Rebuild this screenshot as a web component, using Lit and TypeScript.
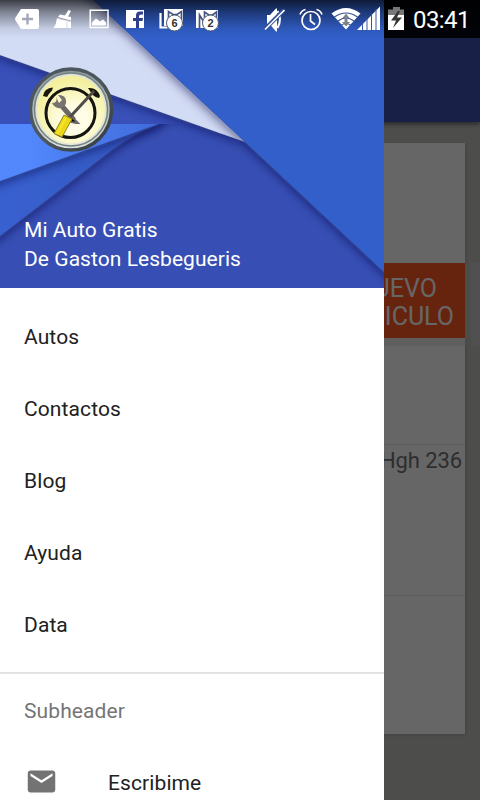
import { LitElement, css, html, svg } from "lit";
import { customElement, property } from "lit/decorators.js";

/**
 * @tag status-bar
 * @summary Translucent system bar with notification and device icons
 */
@customElement("status-bar")
export class StatusBar extends LitElement {
  @property()
  time = "";

  static styles = css`
    :host {
      display: flex;
      height: 38px;
      align-items: center;
      padding-left: 9px;
      box-sizing: border-box;
      color: #fff;
      background: linear-gradient(rgba(0, 0, 0, 0.72), rgba(0, 0, 0, 0.4) 32%, rgba(0, 0, 0, 0.08) 75%, transparent);
    }

    svg {
      display: block;
      flex: none;
      fill: #fff;
    }

    .device {
      display: flex;
      align-items: center;
      margin-left: 32px;
    }

    .time {
      padding: 2px 0 0 5px;
      font-size: 24px;
      letter-spacing: -0.6px;
      line-height: 36px;
      white-space: nowrap;
    }

    .count {
      font: bold 11px "Liberation Sans", sans-serif;
      fill: #333;
      text-anchor: middle;
    }
  `;

  renderCat(count: string, doubled: boolean) {
    return html`<svg width="36" height="38" viewBox="0 0 36 38">
      ${doubled
        ? svg`<path d="M7.500 13v14.500h7" fill="none" stroke="#fff" stroke-width="2.200" />
          <path d="M11 9h19v17H11z" />
          <path d="M15.500 20v-8.500l4.500 3h4l4.500-3V20" fill="none" stroke="#46557f" stroke-width="1.700" />`
        : svg`<path d="M7 10h22v18H7z" />
          <path d="M10.500 28V15l5 8M15.500 18v-6l4.500 3h3.500l4-3V18" fill="none" stroke="#46557f" stroke-width="1.700" />`}
      <circle cx="21.500" cy="23" r="8" stroke="#4c5876" stroke-width="1" />
      <text class="count" x="21.500" y="27">${count}</text>
    </svg>`;
  }

  render() {
    return html`
      <svg width="36" height="38" viewBox="0 0 36 38">
        <path d="M12 9h16q2 0 2 2v16q0 2-2 2H12l-5.500-8.500q-1-1.500 0-3z" />
        <path d="M18.500 13.500v11M13 19h11" stroke="#a4a9b9" stroke-width="2.400" />
      </svg>
      <svg width="36" height="38" viewBox="0 0 36 38">
        <path d="M23.500 10l2.500 1-3 5.500 3 .500v3.500l-13-3.500 2-2.500 5 1z" />
        <path d="M12 18l14 3.500v6.500H10h-1.500q3-4 3.500-10z" />
        <path d="M12 18.200l13 3.300M22 22v6" fill="none" stroke="#a9adbc" stroke-width=".500" />
      </svg>
      <svg width="36" height="38" viewBox="0 0 36 38">
        <path d="M9.200 10.200h17.800v17.300H9.200z" fill="none" stroke="#fff" stroke-width="1.500" />
        <path d="M11 25.500v-3l4-4 4 3 3-2 3 3v3z" />
      </svg>
      <svg width="36" height="38" viewBox="0 0 36 38">
        <path d="M9 10h18v18H9z" />
        <path d="M19 28v-7h-3v-3h3v-2.500q0-4 4-4h3v3h-2q-2 0-2 2V18h4l-.500 3H22v7z" fill="#303f88" />
      </svg>
      ${this.renderCat("6", true)} ${this.renderCat("2", false)}
      <div class="device">
        <svg width="36" height="38" viewBox="0 0 36 38">
          <path d="M10 15h3l6-6.500h1v23h-1l-6-7h-3z" />
          <path d="M20.500 11q5 8 0 17" fill="none" stroke="#fff" stroke-width="2" />
          <path d="M8 29L27 10" stroke="#355196" stroke-width="4" />
          <path d="M8 29.500L27.500 10" stroke="#fff" stroke-width="1.600" />
        </svg>
        <svg width="36" height="38" viewBox="0 0 36 38">
          <g fill="none" stroke="#fff" stroke-width="1.700">
            <circle cx="18" cy="20.500" r="9" />
            <path d="M17.500 14v7l4.500 3.500M7 14.500q1.500-4 5.500-5M23.500 9.500q4 1 5.500 5" />
          </g>
        </svg>
        <svg width="56" height="38" viewBox="0 0 56 38">
          <path d="M17 29.500L2.500 13.500q14.500-11 29 0z" />
          <g fill="none" stroke="#38528f" stroke-width="1.200">
            <path d="M5.500 17q11.500-8 23 0M9 21q8-6 16 0M12.500 25q4.500-3 9 0" />
          </g>
          <path d="M17 13.500l3.500 4.500h-2v4h2.500l-4 4.500-4-4.500h2.500v-4h-2z" fill="#7b828c" />
          <path d="M28 30L51 6.500V30z" />
          <path d="M33.500 24v7M38 19v12M42.500 14v17M47 9v22" stroke="#3457ad" stroke-width="1" />
        </svg>
        <svg width="23" height="38" viewBox="0 0 23 38">
          <path d="M8 7h7v2.500h4V16H3V9.500h5z" fill="#777" />
          <path d="M3 15h16v15H3z" />
          <path d="M13 11l-7 9.500h5l-3 7.500 9-10.500h-5l3-6.500z" fill="#333" />
        </svg>
        <span class="time">${this.time}</span>
      </div>
    `;
  }
}

/**
 * @tag drawer-header
 * @summary Account header with the layered paper artwork and app badge
 */
@customElement("drawer-header")
export class DrawerHeader extends LitElement {
  static styles = css`
    :host {
      display: grid;
      height: 288px;
      overflow: hidden;
      background: #374fb5;
    }

    .art,
    .content {
      grid-area: 1 / 1;
    }

    .content {
      display: flex;
      flex-direction: column;
      justify-content: space-between;
      padding: 66px 24px 14px;
      z-index: 1;
    }

    .badge {
      margin-left: 4px;
    }

    .names {
      color: #fff;
      font-size: 21px;
      letter-spacing: 0.05px;
      line-height: 29px;
    }
  `;

  render() {
    return html`
      <svg class="art" width="384" height="288" viewBox="0 0 384 288">
        <defs>
          <filter id="shade" x="-20%" y="-20%" width="140%" height="140%">
            <feDropShadow dx="0" dy="2" stdDeviation="6" flood-color="#071347" flood-opacity=".65" />
          </filter>
          <linearGradient id="mid" x1="0" y1="0" x2="1" y2="0">
            <stop offset="0" stop-color="#3863d3" />
            <stop offset="1" stop-color="#3454ba" />
          </linearGradient>
          <linearGradient id="light" x1="0" y1="0" x2="1" y2="0">
            <stop offset=".3" stop-color="#5287fc" />
            <stop offset="1" stop-color="#3f68d8" />
          </linearGradient>
        </defs>
        <path d="M-30 100H190L158 125Q135 133 112 150L0 236L-30 259z" fill="url(#mid)" filter="url(#shade)" />
        <path d="M-30 100H168L158 124L0 181L-30 192z" fill="url(#light)" filter="url(#shade)" />
        <path d="M-30 30H245V142L190 124H-30z" fill="#3850b8" />
        <path d="M-30-30H61L245 142L0 55L-30 44z" fill="#d3dcf5" filter="url(#shade)" />
        <path d="M61-30H414V300L384 272L245 142z" fill="#335fc9" filter="url(#shade)" />
      </svg>
      <div class="content">
        <svg class="badge" width="88" height="88" viewBox="0 0 88 88">
          <defs>
            <linearGradient id="rim" x1="0" y1="0" x2="1" y2="1">
              <stop offset="0" stop-color="#4b5662" />
              <stop offset=".5" stop-color="#4d585d" />
              <stop offset="1" stop-color="#343c3e" />
            </linearGradient>
            <linearGradient id="metal" x1="0" y1="0" x2="0" y2="1">
              <stop offset="0" stop-color="#8a959a" />
              <stop offset="1" stop-color="#dce2df" />
            </linearGradient>
            <radialGradient id="face" cx=".55" cy=".65" r=".6">
              <stop offset=".3" stop-color="#fffde6" />
              <stop offset="1" stop-color="#f3ef9c" />
            </radialGradient>
          </defs>
          <circle cx="43" cy="43.500" r="40.500" fill="url(#metal)" stroke="url(#rim)" stroke-width="3.500" />
          <circle cx="43" cy="43.500" r="36.500" fill="#dfe5dc" stroke="#75817f" stroke-width="1.500" />
          <circle cx="43" cy="43.500" r="34" fill="url(#face)" />
          <circle cx="42.500" cy="47" r="24.500" fill="none" stroke="#141410" stroke-width="3" />
          <path d="M15 30q1-8 10-8.500l-1 3q-3 3-5 6.500zM60 22q9-1 12 8l-1 2q-6-1-9-7z" fill="#17170f" />
          <path d="M33 39L46 54" stroke="#6c6965" stroke-width="5" />
          <path d="M42 49l8 8-2 0-5-1z" stroke="#6c6965" stroke-width="2" />
          <path d="M28 31q2 6-4 6 3 6 9 5 6-2 5-8-1-5-8-5l4 5-3 3z" fill="#77736f" />
          <path d="M66 25L42 51" stroke="#504b46" stroke-width="3" />
          <path d="M36 49l8 4-10 18-8-3.500z" fill="#ead817" stroke="#95841a" stroke-width="1" />
          <path d="M38 52l-9 16" stroke="#f5e42c" stroke-width="2" />
        </svg>
        <div class="names">
          <div>Mi Auto Gratis</div>
          <div>De Gaston Lesbegueris</div>
        </div>
      </div>
    `;
  }
}

/**
 * @tag vehicle-page
 * @summary Page that stays visible, dimmed, beside the open drawer
 */
@customElement("vehicle-page")
export class VehiclePage extends LitElement {
  static styles = css`
    :host {
      display: flex;
      flex-direction: column;
      background: #c1c1bd;
    }

    .system {
      height: 38px;
      background: #060914;
    }

    .toolbar {
      height: 84px;
      background: #3f51b5;
      box-shadow: 0 2px 5px rgba(0, 0, 0, 0.5);
    }

    .card {
      display: flex;
      flex-direction: column;
      height: 591px;
      margin: 21px 15px 0;
      background: #fff;
      box-shadow: 1px 1px 3px rgba(0, 0, 0, 0.15);
    }

    .space {
      height: 120px;
    }

    .actions {
      display: flex;
      justify-content: flex-end;
      height: 75px;
      margin-right: -15px;
      padding-bottom: 8px;
      background: linear-gradient(90deg, #ebebeb 450px, #bdbdba 450px, #bdbdba 456px, #c8c9c9 456px);
    }

    .new {
      width: 150px;
      box-sizing: border-box;
      margin-right: 15px;
      padding: 12px 11px 0 0;
      background: #ff5722;
      color: #fff;
      font-size: 25px;
      line-height: 28px;
      text-align: right;
    }

    .first {
      padding-right: 17px;
    }

    .row {
      height: 98px;
      border-bottom: 1px solid #e4e4e4;
    }

    .vehicle {
      height: 150px;
      padding-right: 3px;
      color: #737373;
      font-size: 22px;
      letter-spacing: -0.1px;
      line-height: 32px;
      text-align: right;
    }
  `;

  render() {
    return html`
      <div class="system"></div>
      <div class="toolbar"></div>
      <div class="card">
        <div class="space"></div>
        <div class="actions">
          <div class="new">
            <div class="first">NUEVO</div>
            <div>VEHICULO</div>
          </div>
        </div>
        <div class="row"></div>
        <div class="row vehicle">Hgh 236</div>
      </div>
    `;
  }
}

@customElement("app-root")
export class AppRoot extends LitElement {
  items = ["Autos", "Contactos", "Blog", "Ayuda", "Data"];

  static styles = css`
    :host {
      display: grid;
      width: 480px;
      height: 800px;
      overflow: hidden;
      font-family: Roboto, sans-serif;
    }

    vehicle-page,
    .scrim,
    .drawer,
    status-bar {
      grid-area: 1 / 1;
      min-height: 0;
    }

    .scrim {
      background: rgba(0, 0, 0, 0.6);
      z-index: 1;
    }

    .drawer {
      width: 384px;
      overflow: hidden;
      background: #fff;
      z-index: 2;
    }

    status-bar {
      z-index: 3;
    }

    .menu {
      padding: 12px 0;
      border-bottom: 2px solid #e2e2e2;
    }

    .item {
      display: flex;
      align-items: center;
      height: 72px;
      padding: 1px 24px 0;
      box-sizing: border-box;
      color: #212121;
      font-size: 21px;
      letter-spacing: 0.1px;
    }

    .subheader {
      color: #757575;
    }

    .mail {
      width: 33px;
      height: 33px;
      margin: 0 50px 2px 1px;
      fill: #737373;
    }
  `;

  render() {
    return html`
      <vehicle-page></vehicle-page>
      <div class="scrim"></div>
      <div class="drawer">
        <drawer-header></drawer-header>
        <div class="menu">${this.items.map((item) => html`<div class="item">${item}</div>`)}</div>
        <div class="item subheader">Subheader</div>
        <div class="item">
          <svg class="mail" viewBox="0 0 24 24">
            <path
              d="M20 4H4c-1.100 0-1.990.900-1.990 2L2 18c0 1.100.900 2 2 2h16c1.100 0 2-.900 2-2V6c0-1.100-.900-2-2-2zm0 4l-8 5-8-5V6l8 5 8-5v2z"
            />
          </svg>
          Escribime
        </div>
      </div>
      <status-bar time="03:41"></status-bar>
    `;
  }
}
